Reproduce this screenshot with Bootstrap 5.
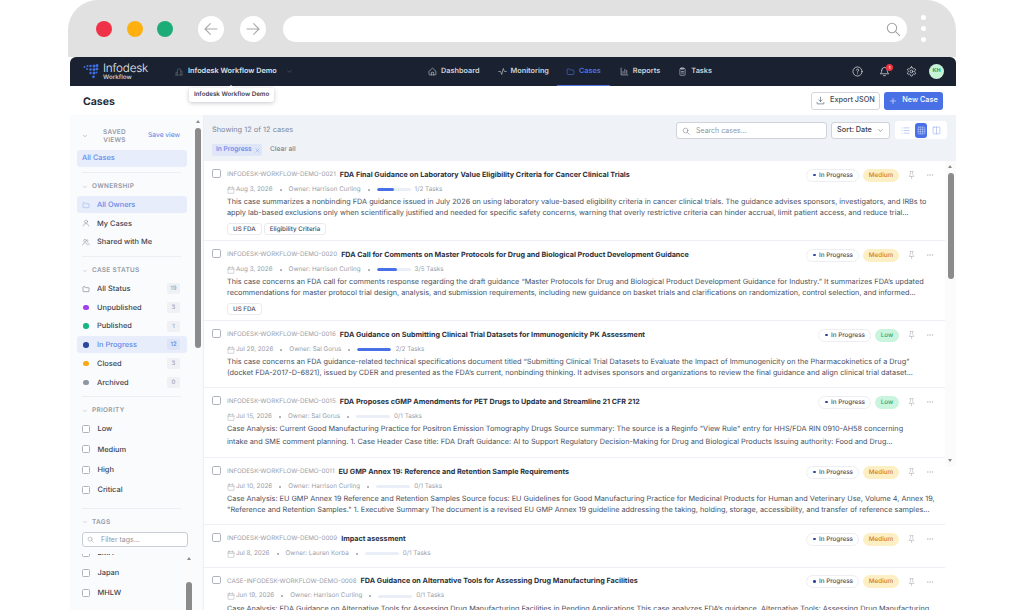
<!DOCTYPE html>
<html lang="en">
<head>
  <meta charset="UTF-8">
  <meta name="viewport" content="width=device-width, initial-scale=1.0">
  <title>Infodesk Workflow - Cases</title>
  <link href="https://cdn.jsdelivr.net/npm/bootstrap@5.3.2/dist/css/bootstrap.min.css" rel="stylesheet">
  <style>
    html, body { height: 610px; overflow: hidden; background: #fff; }
    body { font-family: Inter, "Liberation Sans", sans-serif; font-size: 7.2px; color: #2b3240; text-rendering: geometricPrecision; }
    svg { display: block; flex: none; fill: none; stroke: currentColor; stroke-width: 1.6; stroke-linecap: round; stroke-linejoin: round; }
    .btn, .filter-chip { white-space: nowrap; }

    .frame { width: 888px; margin-left: 68px; height: 610px; overflow: hidden; }
    .chrome { height: 57px; background: #e1e1e1; border-radius: 30px 30px 0 0; padding: 0 29px 0 28px; }
    .light { width: 16px; height: 16px; border-radius: 50%; margin-right: 14.5px; }
    .light.last { margin-right: 24.5px; }
    .nav-circle { width: 26px; height: 26px; border-radius: 50%; background: #fff; color: #a9a9a9; margin-right: 16px; }
    .address { width: 624px; height: 26px; border-radius: 13px; background: #fff; color: #a3a3a3; padding-right: 6px; margin-left: 1px; }
    .chrome-dots { margin-left: 14px; gap: 6px; }
    .chrome-dots i { width: 5px; height: 5px; border-radius: 50%; background: #fff; display: block; }

    .app { margin-left: 2px; width: 886px; }
    .topbar { height: 29px; background: #1a2130; border-radius: 6px 6px 0 0; color: #d5d8de; padding: 0 12px 0 13px; font-weight: 600; font-size: 7.3px; }
    .logo-name { color: #e9ebef; font-size: 11.7px; font-weight: 300; line-height: 12px; letter-spacing: -.2px; }
    .logo-sub { color: #c4c8d0; font-size: 6.2px; line-height: 7px; }
    .workspace { margin-left: 27px; gap: 5px; color: #dfe2e7; width: 253px; }
    .ws-tip { position: absolute; left: 14px; top: 22px; z-index: 5; width: 85px; height: 14px; background: #fff; color: #3a4150; border-radius: 3px; box-shadow: 0 1px 4px rgba(20,30,50,.25); font-size: 6.2px; line-height: 14px; text-align: center; }
    .ws-tip::before { content: ""; position: absolute; left: 39px; top: -3px; border: 3px solid transparent; border-top: 0; border-bottom-color: #fff; }
    .top-link { height: 29px; gap: 4px; color: #cfd3da; text-decoration: none; }
    .top-link.active { color: #4f74e3; border-bottom: 1.5px solid #4f74e3; }
    .top-icons { gap: 16px; color: #dfe2e7; }
    .bell-count { position: absolute; top: -2.5px; right: -3px; width: 7px; height: 7px; padding: 0; border-radius: 50%; background: #ef3340; color: #fff; font-size: 4px; line-height: 7px; }
    .avatar { width: 15px; height: 15px; margin-left: -4px; border-radius: 50%; background: #c6f2d6; color: #1f9d63; font-size: 5.5px; font-weight: 700; line-height: 15px; text-align: center; }

    .page-head { height: 29px; padding: 0 13px; }
    .page-title { font-size: 10.5px; font-weight: 700; margin: 0; padding-top: 3px; color: #232a38; }
    .head-btn { height: 18px; font-size: 7.3px; font-weight: 500; padding: 0 4px; border-radius: 3px; gap: 5px; --bs-btn-font-size: 7.3px; }
    .btn-export { width: 69px; border: 1px solid #d3d6dc; background: #fff; color: #444b59; margin-right: 4px; }
    .btn-new { width: 59px; border: 0; background: #4a70e6; color: #fff; }

    .body-wrap { height: 495px; }
    .side { width: 134px; flex: none; background: #fafbfd; border-right: 1px solid #eceef2; padding-top: 10.5px; position: relative; overflow: hidden; font-weight: 500; font-size: 7.4px; color: #3b4250; }
    .side-title { height: 20px; padding: 0 23px 0 12px; }
    .saved-label { width: 45px; text-align: center; color: #9299a5; font-size: 6.4px; line-height: 8px; letter-spacing: .3px; font-weight: 600; }
    .side-link { color: #6b8de9; font-size: 6.6px; text-decoration: none; margin-left: auto; white-space: nowrap; }
    .side-rule { margin: 5.5px 22px 8.5px 12px; height: 1px; background: #eceef2; border: 0; opacity: 1; }
    .side-label { height: 10px; margin: 0 12px 4.5px; gap: 4px; color: #9299a5; font-size: 6.4px; font-weight: 600; letter-spacing: .35px; }
    .side-item { height: 17px; margin: 0 16px 1.75px 6.5px; padding: 0 7px 0 5.5px; gap: 7px; border-radius: 3px; }
    .side-item.on { background: #e7edfa; color: #6288ea; }
    .side-item svg { width: 8px; height: 8px; stroke-width: 1.3; color: #737a87; }
    .side-item.on svg { color: #7b9cec; }
    .status-dot { width: 5.5px; height: 5.5px; border-radius: 50%; margin: 0 1.5px 0 1px; }
    .count { margin-left: auto; background: #f0f1f4; color: #a0a5ae; font-size: 6px; height: 11px; min-width: 13px; padding: 0 3px; border-radius: 2px; line-height: 11px; text-align: center; }
    .side-item.on .count { background: #dde4f5; color: #6288ea; }
    .check-row { height: 17px; margin: 0 16px 3.4px 12px; gap: 7.5px; }
    .check-row .form-check-input, .case-check { width: 8px; height: 8px; margin: 0; border: 1px solid #aeb3bc; border-radius: 1.5px; background-color: #fff; flex: none; }
    .priority-group { margin-bottom: 9.5px; }
    .tag-filter { position: relative; margin: 2px 15px 0 12px; }
    .tag-filter svg { position: absolute; left: 5px; top: 4px; width: 7px; height: 7px; color: #8d93a0; }
    .tag-filter .form-control { height: 15.5px; min-height: 0; padding: 0 0 0 18px; font-size: 7px; border: 1px solid #c9cdd4; border-radius: 3px; background: #fff; }
    .tag-filter .form-control::placeholder, .case-search .form-control::placeholder { color: #9096a2; }
    .tag-scroll { height: 70px; overflow: hidden; margin-top: 6.5px; }
    .tag-scroll .check-row { margin-bottom: 3px; }
    .tag-scroll .check-row:first-child { margin-top: -9.5px; }

    .sbar { position: absolute; background: #fbfbfc; }
    .sbar b { position: absolute; background: #8b8b8b; border-radius: 3px; width: 6px; }
    .sbar::before { content: ""; position: absolute; border: 2.5px solid transparent; border-top: 0; border-bottom: 3.5px solid #8b8b8b; }
    .sbar-side { left: 123px; top: 0; width: 10px; height: 240px; background: none; }
    .sbar-side::before { left: 2.5px; top: 5px; }
    .sbar-side b { left: 2px; top: 13px; height: 220px; }
    .sbar-tags { left: 114px; top: 440px; width: 10px; height: 60px; }
    .sbar-tags::before { left: 2.5px; top: 2px; }
    .sbar-tags b { left: 2px; top: 27px; height: 40px; }
    .sbar-main { right: 0; top: 46px; width: 11px; height: 306px; border-radius: 0 0 4px 0; }
    .sbar-main::before { left: 3px; top: 4px; }
    .sbar-main::after { content: ""; position: absolute; left: 3px; bottom: 5px; border: 2.5px solid transparent; border-bottom: 0; border-top: 3.5px solid #8b8b8b; }
    .sbar-main b { left: 2.5px; top: 12px; height: 106px; }

    .main { position: relative; flex: 1; min-width: 0; }
    .filter-bar { height: 46px; background: #eff3f8; padding: 6px 9px 0 8px; }
    .filter-top { height: 18px; }
    .showing { color: #80879a; font-size: 7.4px; }
    .case-search { position: relative; width: 151px; }
    .case-search svg { position: absolute; left: 6px; top: 5px; width: 8px; height: 8px; color: #777e8b; }
    .case-search .form-control { height: 17px; min-height: 0; font-size: 7px; padding: 0 0 0 19px; border: 1px solid #cfd3da; border-radius: 3px; }
    .sort-btn { width: 59px; height: 17px; margin-left: 4px; padding: 0 3px; gap: 5px; border: 1px solid #cfd3da; border-radius: 3px; background: #fff; color: #3a4150; font-size: 7.3px; font-weight: 500; --bs-btn-font-size: 7.3px; }
    .view-toggle { width: 52px; height: 18px; margin-left: 5px; background: #fff; border-radius: 3px; padding: 1.5px 4px; gap: 3px; color: #7f9cec; }
    .view-toggle span { width: 14px; height: 15px; display: flex; align-items: center; justify-content: center; border-radius: 3px; }
    .view-toggle span.active { background: #4a70e6; color: #cdd8f8; }
    .view-toggle svg { width: 9px; height: 9px; stroke-width: 1.3; }
    .filter-chips { margin-top: 5px; gap: 8px; }
    .filter-chip { height: 12px; width: 50px; background: #dfe6f8; color: #5f83e5; border-radius: 2px; gap: 3px; padding: 0 4px; font-size: 6.6px; font-weight: 500; }
    .clear-all { color: #7b818e; font-size: 6.6px; font-weight: 500; }

    .case-list { width: 741px; background: #fff; }
    .case-row { padding: 8px 11px 9px 8px; border-bottom: 1px solid #eef0f5; }
    .case-row.with-tags { padding-bottom: 5px; }
    .case-row.no-desc { padding-bottom: 7px; }
    .case-check { margin-top: 0; width: 8.5px; height: 8.5px; }
    .case-body { margin-left: 6.5px; flex: 1; min-width: 0; white-space: nowrap; }
    .case-head { height: 12px; gap: 4px; }
    .case-id { color: #9aa0ab; font-size: 6.25px; }
    .case-name { color: #2b3240; font-weight: 700; font-size: 7.2px; margin: 0; }
    .status-pill { height: 13px; padding: 0 5px 0 6px; gap: 3px; border: 1px solid #eceef3; border-radius: 7px; background: #fff; color: #4a5160; font-size: 6.3px; font-weight: 500; line-height: 1; margin-left: auto; }
    .status-pill i { width: 2.5px; height: 2.5px; flex: none; border-radius: 50%; background: #2b47a0; display: block; }
    .prio { height: 13px; border-radius: 7px; font-size: 6.3px; font-weight: 500; text-align: center; line-height: 13px; }
    .prio-medium { width: 36px; background: #fdefc4; color: #cf7a22; }
    .prio-low { width: 24px; background: #c9f4de; color: #2ea56f; }
    .row-tools { color: #9a9fa9; margin-left: 4px; gap: 10px; }
    .row-tools svg { width: 9px; height: 10px; stroke-width: 1.2; }
    .row-tools svg + svg { width: 8px; }
    .case-meta { height: 12px; margin-top: 2.5px; gap: 7px; color: #9aa0ab; font-size: 6.3px; }
    .case-meta svg { width: 8px; height: 8px; stroke-width: 1.1; color: #858b97; margin-right: 1px; }
    .meta-dot { width: 2px; height: 2px; border-radius: 50%; background: #9aa0ab; }
    .task-bar { width: 34px; height: 3px; margin-right: -3px; background: #eaeff7; }
    .task-bar .progress-bar { background: #4a70e6; border-radius: 2px; }
    .case-desc { margin: 1.5px 0 0; color: #4a5160; font-size: 7.3px; line-height: 10.5px; }
    .case-desc.tall { margin-top: -.5px; line-height: 13px; }
    .case-tags { margin-top: 5px; gap: 2px; }
    .case-tag { height: 12px; padding: 0 5px; border: 1px solid #e9ebf0; border-radius: 3px; color: #474e5c; font-size: 6.25px; font-weight: 500; line-height: 10px; }
  </style>
</head>
<body>
  <svg width="0" height="0" style="position:absolute">
    <symbol id="i-folder" viewBox="0 0 24 24"><path d="M3 7a2 2 0 0 1 2-2h4l2 3h8a2 2 0 0 1 2 2v8a2 2 0 0 1-2 2H5a2 2 0 0 1-2-2z"/></symbol>
    <symbol id="i-user" viewBox="0 0 24 24"><circle cx="12" cy="8" r="4.5"/><path d="M4 21c0-4.500 3.500-7 8-7s8 2.500 8 7"/></symbol>
    <symbol id="i-users" viewBox="0 0 24 24"><circle cx="9" cy="8" r="4"/><path d="M2 21c0-4 3-6.500 7-6.500s7 2.500 7 6.500M16 4.500a4 4 0 0 1 0 7M18 15c2.500.7 4 3 4 6"/></symbol>
    <symbol id="i-down" viewBox="0 0 24 24"><path d="M6 9l6 6 6-6"/></symbol>
    <symbol id="i-search" viewBox="0 0 24 24"><circle cx="10.500" cy="10.500" r="7"/><path d="M16 16l6 6"/></symbol>
    <symbol id="i-calendar" viewBox="0 0 24 24"><rect x="3" y="5" width="18" height="17" rx="2"/><path d="M3 10h18M8 2v5M16 2v5"/></symbol>
    <symbol id="i-pin" viewBox="0 0 24 24"><path d="M8 3h8M9 3v8l-3 4v1h12v-1l-3-4V3M12 16v6"/></symbol>
    <symbol id="i-more" viewBox="0 0 24 24"><circle cx="5" cy="12" r="1"/><circle cx="12" cy="12" r="1"/><circle cx="19" cy="12" r="1"/></symbol>
  </svg>

  <div class="frame">
    <div class="chrome d-flex align-items-center">
      <div class="light" style="background:#ef3248"></div>
      <div class="light" style="background:#fdb010"></div>
      <div class="light last" style="background:#1cac78"></div>
      <div class="nav-circle d-flex align-items-center justify-content-center">
        <svg width="16" height="16" viewBox="0 0 24 24" stroke-width="2.200"><path d="M21 12H3M11 4l-8 8 8 8"/></svg>
      </div>
      <div class="nav-circle d-flex align-items-center justify-content-center">
        <svg width="16" height="16" viewBox="0 0 24 24" stroke-width="2.200"><path d="M3 12h18M13 4l8 8-8 8"/></svg>
      </div>
      <div class="address d-flex align-items-center justify-content-end">
        <svg width="16" height="16" viewBox="0 0 24 24" stroke-width="2"><use href="#i-search"/></svg>
      </div>
      <div class="chrome-dots d-flex flex-column"><i></i><i></i><i></i></div>
    </div>

    <div class="app">
      <nav class="topbar d-flex align-items-center">
        <svg width="16" height="15" viewBox="0 0 16 15" style="fill:#3f6fe0;stroke:none">
          <circle cx="1.500" cy="3" r="1"/><circle cx="4.500" cy="2" r="1"/><circle cx="7.500" cy="2" r="1.200"/><circle cx="11" cy="2" r="1.500"/><circle cx="14" cy="1.500" r="1.500"/>
          <circle cx="4" cy="5" r="1"/><circle cx="7.500" cy="5.500" r="1.300"/><circle cx="11" cy="5.500" r="1.500"/><circle cx="14" cy="5" r="1.400"/>
          <circle cx="7.500" cy="9" r="1.200"/><circle cx="11" cy="9" r="1.500"/><circle cx="13.500" cy="8.500" r="1"/>
          <circle cx="10.500" cy="12.800" r="1.400"/>
        </svg>
        <div class="ms-1">
          <div class="logo-name">Infodesk</div>
          <div class="logo-sub">Workflow</div>
        </div>
        <div class="workspace d-flex align-items-center position-relative">
          <svg width="8" height="8" viewBox="0 0 24 24" class="text-secondary"><path d="M7 21V5a2 2 0 0 1 2-2h6a2 2 0 0 1 2 2v16M3 21v-8h4M17 9h4v12M2 21h20"/></svg>
          <span>Infodesk Workflow Demo</span>
          <svg width="7" height="7" viewBox="0 0 24 24" class="text-secondary ms-1"><use href="#i-down"/></svg>
          <div class="ws-tip">Infodesk Workflow Demo</div>
        </div>
        <a class="top-link d-flex align-items-center" href="#">
          <svg width="9" height="9" viewBox="0 0 24 24"><path d="M3 11l9-8 9 8v9a1 1 0 0 1-1 1H4a1 1 0 0 1-1-1zM9 21v-7h6v7"/></svg>Dashboard
        </a>
        <a class="top-link d-flex align-items-center" href="#" style="margin-left:18px">
          <svg width="9" height="9" viewBox="0 0 24 24"><path d="M2 12h5l3 8 4-16 3 8h5"/></svg>Monitoring
        </a>
        <a class="top-link active d-flex align-items-center" href="#" style="margin-left:8px;padding:0 9px">
          <svg width="9" height="9" viewBox="0 0 24 24"><use href="#i-folder"/></svg>Cases
        </a>
        <a class="top-link d-flex align-items-center" href="#" style="margin-left:10px">
          <svg width="9" height="9" viewBox="0 0 24 24"><path d="M3 3v18h18M8 17v-5M13 17V6M18 17v-8"/></svg>Reports
        </a>
        <a class="top-link d-flex align-items-center" href="#" style="margin-left:18px">
          <svg width="9" height="9" viewBox="0 0 24 24"><rect x="5" y="4" width="14" height="18" rx="2"/><path d="M9 2h6v4H9zM9 12h6M9 16h6"/></svg>Tasks
        </a>
        <div class="top-icons d-flex align-items-center ms-auto">
          <svg width="11" height="11" viewBox="0 0 24 24"><circle cx="12" cy="12" r="10"/><path d="M9.500 9a2.500 2.500 0 1 1 4 2c-1 .7-1.500 1.300-1.500 2.500M12 17v.2"/></svg>
          <div class="position-relative">
            <svg width="11" height="11" viewBox="0 0 24 24"><path d="M6 9a6 6 0 0 1 12 0c0 6 3 8 3 8H3s3-2 3-8M10 21h4"/></svg>
            <span class="bell-count badge">1</span>
          </div>
          <svg width="11" height="11" viewBox="0 0 24 24"><path d="M12.220 2h-.44a2 2 0 0 0-2 2v.18a2 2 0 0 1-1 1.730l-.43.25a2 2 0 0 1-2 0l-.15-.08a2 2 0 0 0-2.730.73l-.22.38a2 2 0 0 0 .73 2.730l.15.1a2 2 0 0 1 1 1.720v.51a2 2 0 0 1-1 1.740l-.15.09a2 2 0 0 0-.73 2.730l.22.38a2 2 0 0 0 2.730.73l.15-.08a2 2 0 0 1 2 0l.43.25a2 2 0 0 1 1 1.730V20a2 2 0 0 0 2 2h.44a2 2 0 0 0 2-2v-.18a2 2 0 0 1 1-1.730l.43-.25a2 2 0 0 1 2 0l.15.08a2 2 0 0 0 2.730-.73l.22-.39a2 2 0 0 0-.73-2.730l-.15-.08a2 2 0 0 1-1-1.740v-.5a2 2 0 0 1 1-1.740l.15-.09a2 2 0 0 0 .73-2.730l-.22-.38a2 2 0 0 0-2.730-.73l-.15.08a2 2 0 0 1-2 0l-.43-.25a2 2 0 0 1-1-1.730V4a2 2 0 0 0-2-2z"/><circle cx="12" cy="12" r="3"/></svg>
          <div class="avatar">KH</div>
        </div>
      </nav>

      <div class="page-head d-flex align-items-center justify-content-between">
        <h1 class="page-title">Cases</h1>
        <div class="d-flex">
          <button class="btn btn-export head-btn d-flex align-items-center justify-content-center">
            <svg width="9" height="9" viewBox="0 0 24 24"><path d="M12 3v12M7 10l5 5 5-5M3 17v3a1 1 0 0 0 1 1h16a1 1 0 0 0 1-1v-3"/></svg>Export JSON
          </button>
          <button class="btn btn-new head-btn d-flex align-items-center justify-content-center">
            <svg width="8" height="8" viewBox="0 0 24 24"><path d="M12 4v16M4 12h16"/></svg>New Case
          </button>
        </div>
      </div>

      <div class="body-wrap d-flex">
        <aside class="side">
          <div class="side-title d-flex align-items-center">
            <svg width="6" height="6" viewBox="0 0 24 24" class="text-secondary"><use href="#i-down"/></svg>
            <div class="saved-label ms-1">SAVED VIEWS</div>
            <a class="side-link" href="#">Save view</a>
          </div>
          <div class="side-item on d-flex align-items-center mt-1">All Cases</div>
          <hr class="side-rule">

          <div class="side-label d-flex align-items-center"><svg width="6" height="6" viewBox="0 0 24 24"><use href="#i-down"/></svg>OWNERSHIP</div>
          <div class="side-item on d-flex align-items-center"><svg viewBox="0 0 24 24"><use href="#i-folder"/></svg>All Owners</div>
          <div class="side-item d-flex align-items-center"><svg viewBox="0 0 24 24"><use href="#i-user"/></svg>My Cases</div>
          <div class="side-item d-flex align-items-center"><svg viewBox="0 0 24 24"><use href="#i-users"/></svg>Shared with Me</div>
          <hr class="side-rule">

          <div class="side-label d-flex align-items-center"><svg width="6" height="6" viewBox="0 0 24 24"><use href="#i-down"/></svg>CASE STATUS</div>
          <div class="side-item d-flex align-items-center"><svg viewBox="0 0 24 24" style="color:#3b4250"><use href="#i-folder"/></svg>All Status<span class="count">19</span></div>
          <div class="side-item d-flex align-items-center"><span class="status-dot" style="background:#a03ef0"></span>Unpublished<span class="count">3</span></div>
          <div class="side-item d-flex align-items-center"><span class="status-dot" style="background:#16b77e"></span>Published<span class="count">1</span></div>
          <div class="side-item on d-flex align-items-center"><span class="status-dot" style="background:#2b47a0"></span>In Progress<span class="count">12</span></div>
          <div class="side-item d-flex align-items-center"><span class="status-dot" style="background:#fbab12"></span>Closed<span class="count">3</span></div>
          <div class="side-item d-flex align-items-center"><span class="status-dot" style="background:#8e95a3"></span>Archived<span class="count">0</span></div>
          <hr class="side-rule">

          <div class="side-label d-flex align-items-center"><svg width="6" height="6" viewBox="0 0 24 24"><use href="#i-down"/></svg>PRIORITY</div>
          <div class="priority-group">
            <label class="check-row d-flex align-items-center"><input class="form-check-input" type="checkbox">Low</label>
            <label class="check-row d-flex align-items-center"><input class="form-check-input" type="checkbox">Medium</label>
            <label class="check-row d-flex align-items-center"><input class="form-check-input" type="checkbox">High</label>
            <label class="check-row d-flex align-items-center"><input class="form-check-input" type="checkbox">Critical</label>
          </div>
          <hr class="side-rule">

          <div class="side-label d-flex align-items-center"><svg width="6" height="6" viewBox="0 0 24 24"><use href="#i-down"/></svg>TAGS</div>
          <div class="tag-filter">
            <svg viewBox="0 0 24 24"><use href="#i-search"/></svg>
            <input class="form-control" type="text" placeholder="Filter tags...">
          </div>
          <div class="tag-scroll">
            <label class="check-row d-flex align-items-center"><input class="form-check-input" type="checkbox">LMA</label>
            <label class="check-row d-flex align-items-center"><input class="form-check-input" type="checkbox">Japan</label>
            <label class="check-row d-flex align-items-center"><input class="form-check-input" type="checkbox">MHLW</label>
          </div>
          <div class="sbar sbar-side"><b></b></div>
          <div class="sbar sbar-tags"><b></b></div>
        </aside>

        <main class="main">
          <div class="filter-bar">
            <div class="filter-top d-flex align-items-center">
              <span class="showing me-auto">Showing 12 of 12 cases</span>
              <div class="case-search">
                <svg viewBox="0 0 24 24"><use href="#i-search"/></svg>
                <input class="form-control" type="text" placeholder="Search cases...">
              </div>
              <button class="btn sort-btn d-flex align-items-center justify-content-center">Sort: Date<svg width="7" height="7" viewBox="0 0 24 24"><use href="#i-down"/></svg></button>
              <div class="view-toggle d-flex align-items-center">
                <span><svg viewBox="0 0 24 24"><path d="M8 5h14M8 12h14M8 19h14M2.500 5h.5M2.500 12h.5M2.500 19h.5"/></svg></span>
                <span class="active"><svg viewBox="0 0 24 24"><rect x="3" y="3" width="18" height="18" rx="2"/><path d="M3 9h18M3 15h18M9 3v18M15 3v18"/></svg></span>
                <span><svg viewBox="0 0 24 24"><rect x="3" y="3" width="18" height="18" rx="2"/><path d="M12 3v18"/></svg></span>
              </div>
            </div>
            <div class="filter-chips d-flex align-items-center">
              <span class="filter-chip d-flex align-items-center">In Progress
                <svg width="5" height="5" viewBox="0 0 24 24" stroke-width="2.500"><path d="M4 4l16 16M20 4L4 20"/></svg>
              </span>
              <span class="clear-all">Clear all</span>
            </div>
          </div>

          <div class="case-list">
            <article class="case-row with-tags d-flex">
              <input class="case-check form-check-input" type="checkbox">
              <div class="case-body">
                <div class="case-head d-flex align-items-center">
                  <span class="case-id">INFODESK-WORKFLOW-DEMO-0021</span>
                  <h2 class="case-name">FDA Final Guidance on Laboratory Value Eligibility Criteria for Cancer Clinical Trials</h2>
                  <span class="status-pill d-flex align-items-center"><i></i>In Progress</span>
                  <span class="prio prio-medium">Medium</span>
                  <span class="row-tools d-flex align-items-center"><svg viewBox="0 0 24 24"><use href="#i-pin"/></svg><svg viewBox="0 0 24 24"><use href="#i-more"/></svg></span>
                </div>
                <div class="case-meta d-flex align-items-center">
                  <span class="d-flex align-items-center"><svg viewBox="0 0 24 24"><use href="#i-calendar"/></svg>Aug 3, 2026</span><span class="meta-dot"></span>
                  <span>Owner: Harrison Curling</span><span class="meta-dot"></span>
                  <div class="progress task-bar"><div class="progress-bar" style="width:50%"></div></div><span>1/2 Tasks</span>
                </div>
                <p class="case-desc">This case summarizes a nonbinding FDA guidance issued in July 2026 on using laboratory value-based eligibility criteria in cancer clinical trials. The guidance advises sponsors, investigators, and IRBs to<br>apply lab-based exclusions only when scientifically justified and needed for specific safety concerns, warning that overly restrictive criteria can hinder accrual, limit patient access, and reduce trial...</p>
                <div class="case-tags d-flex"><span class="case-tag">US FDA</span><span class="case-tag">Eligibility Criteria</span></div>
              </div>
            </article>

            <article class="case-row with-tags d-flex">
              <input class="case-check form-check-input" type="checkbox">
              <div class="case-body">
                <div class="case-head d-flex align-items-center">
                  <span class="case-id">INFODESK-WORKFLOW-DEMO-0020</span>
                  <h2 class="case-name">FDA Call for Comments on Master Protocols for Drug and Biological Product Development Guidance</h2>
                  <span class="status-pill d-flex align-items-center"><i></i>In Progress</span>
                  <span class="prio prio-medium">Medium</span>
                  <span class="row-tools d-flex align-items-center"><svg viewBox="0 0 24 24"><use href="#i-pin"/></svg><svg viewBox="0 0 24 24"><use href="#i-more"/></svg></span>
                </div>
                <div class="case-meta d-flex align-items-center">
                  <span class="d-flex align-items-center"><svg viewBox="0 0 24 24"><use href="#i-calendar"/></svg>Aug 3, 2026</span><span class="meta-dot"></span>
                  <span>Owner: Harrison Curling</span><span class="meta-dot"></span>
                  <div class="progress task-bar"><div class="progress-bar" style="width:60%"></div></div><span>3/5 Tasks</span>
                </div>
                <p class="case-desc">This case concerns an FDA call for comments response regarding the draft guidance “Master Protocols for Drug and Biological Product Development Guidance for Industry.” It summarizes FDA’s updated<br>recommendations for master protocol trial design, analysis, and submission requirements, including new guidance on basket trials and clarifications on randomization, control selection, and informed...</p>
                <div class="case-tags d-flex"><span class="case-tag">US FDA</span></div>
              </div>
            </article>

            <article class="case-row d-flex">
              <input class="case-check form-check-input" type="checkbox">
              <div class="case-body">
                <div class="case-head d-flex align-items-center">
                  <span class="case-id">INFODESK-WORKFLOW-DEMO-0016</span>
                  <h2 class="case-name">FDA Guidance on Submitting Clinical Trial Datasets for Immunogenicity PK Assessment</h2>
                  <span class="status-pill d-flex align-items-center"><i></i>In Progress</span>
                  <span class="prio prio-low">Low</span>
                  <span class="row-tools d-flex align-items-center"><svg viewBox="0 0 24 24"><use href="#i-pin"/></svg><svg viewBox="0 0 24 24"><use href="#i-more"/></svg></span>
                </div>
                <div class="case-meta d-flex align-items-center">
                  <span class="d-flex align-items-center"><svg viewBox="0 0 24 24"><use href="#i-calendar"/></svg>Jul 29, 2026</span><span class="meta-dot"></span>
                  <span>Owner: Sal Gorus</span><span class="meta-dot"></span>
                  <div class="progress task-bar"><div class="progress-bar" style="width:100%"></div></div><span>2/2 Tasks</span>
                </div>
                <p class="case-desc">This case concerns an FDA guidance-related technical specifications document titled “Submitting Clinical Trial Datasets to Evaluate the Impact of Immunogenicity on the Pharmacokinetics of a Drug”<br>(docket FDA-2017-D-6821), issued by CDER and presented as the FDA’s current, nonbinding thinking. It advises sponsors and organizations to review the final guidance and align clinical trial dataset...</p>
              </div>
            </article>

            <article class="case-row d-flex">
              <input class="case-check form-check-input" type="checkbox">
              <div class="case-body">
                <div class="case-head d-flex align-items-center">
                  <span class="case-id">INFODESK-WORKFLOW-DEMO-0015</span>
                  <h2 class="case-name">FDA Proposes cGMP Amendments for PET Drugs to Update and Streamline 21 CFR 212</h2>
                  <span class="status-pill d-flex align-items-center"><i></i>In Progress</span>
                  <span class="prio prio-low">Low</span>
                  <span class="row-tools d-flex align-items-center"><svg viewBox="0 0 24 24"><use href="#i-pin"/></svg><svg viewBox="0 0 24 24"><use href="#i-more"/></svg></span>
                </div>
                <div class="case-meta d-flex align-items-center">
                  <span class="d-flex align-items-center"><svg viewBox="0 0 24 24"><use href="#i-calendar"/></svg>Jul 15, 2026</span><span class="meta-dot"></span>
                  <span>Owner: Sal Gorus</span><span class="meta-dot"></span>
                  <div class="progress task-bar"><div class="progress-bar" style="width:0%"></div></div><span>0/1 Tasks</span>
                </div>
                <p class="case-desc tall">Case Analysis: Current Good Manufacturing Practice for Positron Emission Tomography Drugs Source summary: The source is a Reginfo "View Rule" entry for HHS/FDA RIN 0910-AH58 concerning<br>intake and SME comment planning. 1. Case Header Case title: FDA Draft Guidance: AI to Support Regulatory Decision-Making for Drug and Biological Products Issuing authority: Food and Drug...</p>
              </div>
            </article>

            <article class="case-row d-flex">
              <input class="case-check form-check-input" type="checkbox">
              <div class="case-body">
                <div class="case-head d-flex align-items-center">
                  <span class="case-id">INFODESK-WORKFLOW-DEMO-0011</span>
                  <h2 class="case-name">EU GMP Annex 19: Reference and Retention Sample Requirements</h2>
                  <span class="status-pill d-flex align-items-center"><i></i>In Progress</span>
                  <span class="prio prio-medium">Medium</span>
                  <span class="row-tools d-flex align-items-center"><svg viewBox="0 0 24 24"><use href="#i-pin"/></svg><svg viewBox="0 0 24 24"><use href="#i-more"/></svg></span>
                </div>
                <div class="case-meta d-flex align-items-center">
                  <span class="d-flex align-items-center"><svg viewBox="0 0 24 24"><use href="#i-calendar"/></svg>Jul 10, 2026</span><span class="meta-dot"></span>
                  <span>Owner: Harrison Curling</span><span class="meta-dot"></span>
                  <div class="progress task-bar"><div class="progress-bar" style="width:0%"></div></div><span>0/1 Tasks</span>
                </div>
                <p class="case-desc">Case Analysis: EU GMP Annex 19 Reference and Retention Samples Source focus: EU Guidelines for Good Manufacturing Practice for Medicinal Products for Human and Veterinary Use, Volume 4, Annex 19,<br>"Reference and Retention Samples." 1. Executive Summary The document is a revised EU GMP Annex 19 guideline addressing the taking, holding, storage, accessibility, and transfer of reference samples...</p>
              </div>
            </article>

            <article class="case-row no-desc d-flex">
              <input class="case-check form-check-input" type="checkbox">
              <div class="case-body">
                <div class="case-head d-flex align-items-center">
                  <span class="case-id">INFODESK-WORKFLOW-DEMO-0009</span>
                  <h2 class="case-name">Impact asessment</h2>
                  <span class="status-pill d-flex align-items-center"><i></i>In Progress</span>
                  <span class="prio prio-medium">Medium</span>
                  <span class="row-tools d-flex align-items-center"><svg viewBox="0 0 24 24"><use href="#i-pin"/></svg><svg viewBox="0 0 24 24"><use href="#i-more"/></svg></span>
                </div>
                <div class="case-meta d-flex align-items-center">
                  <span class="d-flex align-items-center"><svg viewBox="0 0 24 24"><use href="#i-calendar"/></svg>Jul 8, 2026</span><span class="meta-dot"></span>
                  <span>Owner: Lauren Korba</span><span class="meta-dot"></span>
                  <div class="progress task-bar"><div class="progress-bar" style="width:0%"></div></div><span>0/1 Tasks</span>
                </div>
              </div>
            </article>

            <article class="case-row d-flex">
              <input class="case-check form-check-input" type="checkbox">
              <div class="case-body">
                <div class="case-head d-flex align-items-center">
                  <span class="case-id">CASE-INFODESK-WORKFLOW-DEMO-0008</span>
                  <h2 class="case-name">FDA Guidance on Alternative Tools for Assessing Drug Manufacturing Facilities</h2>
                  <span class="status-pill d-flex align-items-center"><i></i>In Progress</span>
                  <span class="prio prio-medium">Medium</span>
                  <span class="row-tools d-flex align-items-center"><svg viewBox="0 0 24 24"><use href="#i-pin"/></svg><svg viewBox="0 0 24 24"><use href="#i-more"/></svg></span>
                </div>
                <div class="case-meta d-flex align-items-center">
                  <span class="d-flex align-items-center"><svg viewBox="0 0 24 24"><use href="#i-calendar"/></svg>Jun 19, 2026</span><span class="meta-dot"></span>
                  <span>Owner: Harrison Curling</span><span class="meta-dot"></span>
                  <div class="progress task-bar"><div class="progress-bar" style="width:0%"></div></div><span>0/1 Tasks</span>
                </div>
                <p class="case-desc">Case Analysis: FDA Guidance on Alternative Tools for Assessing Drug Manufacturing Facilities in Pending Applications This case analyzes FDA’s guidance, Alternative Tools: Assessing Drug Manufacturing</p>
              </div>
            </article>
          </div>
          <div class="sbar sbar-main"><b></b></div>
        </main>
      </div>
    </div>
  </div>

  <script src="https://cdn.jsdelivr.net/npm/bootstrap@5.3.2/dist/js/bootstrap.bundle.min.js"></script>
</body>
</html>
